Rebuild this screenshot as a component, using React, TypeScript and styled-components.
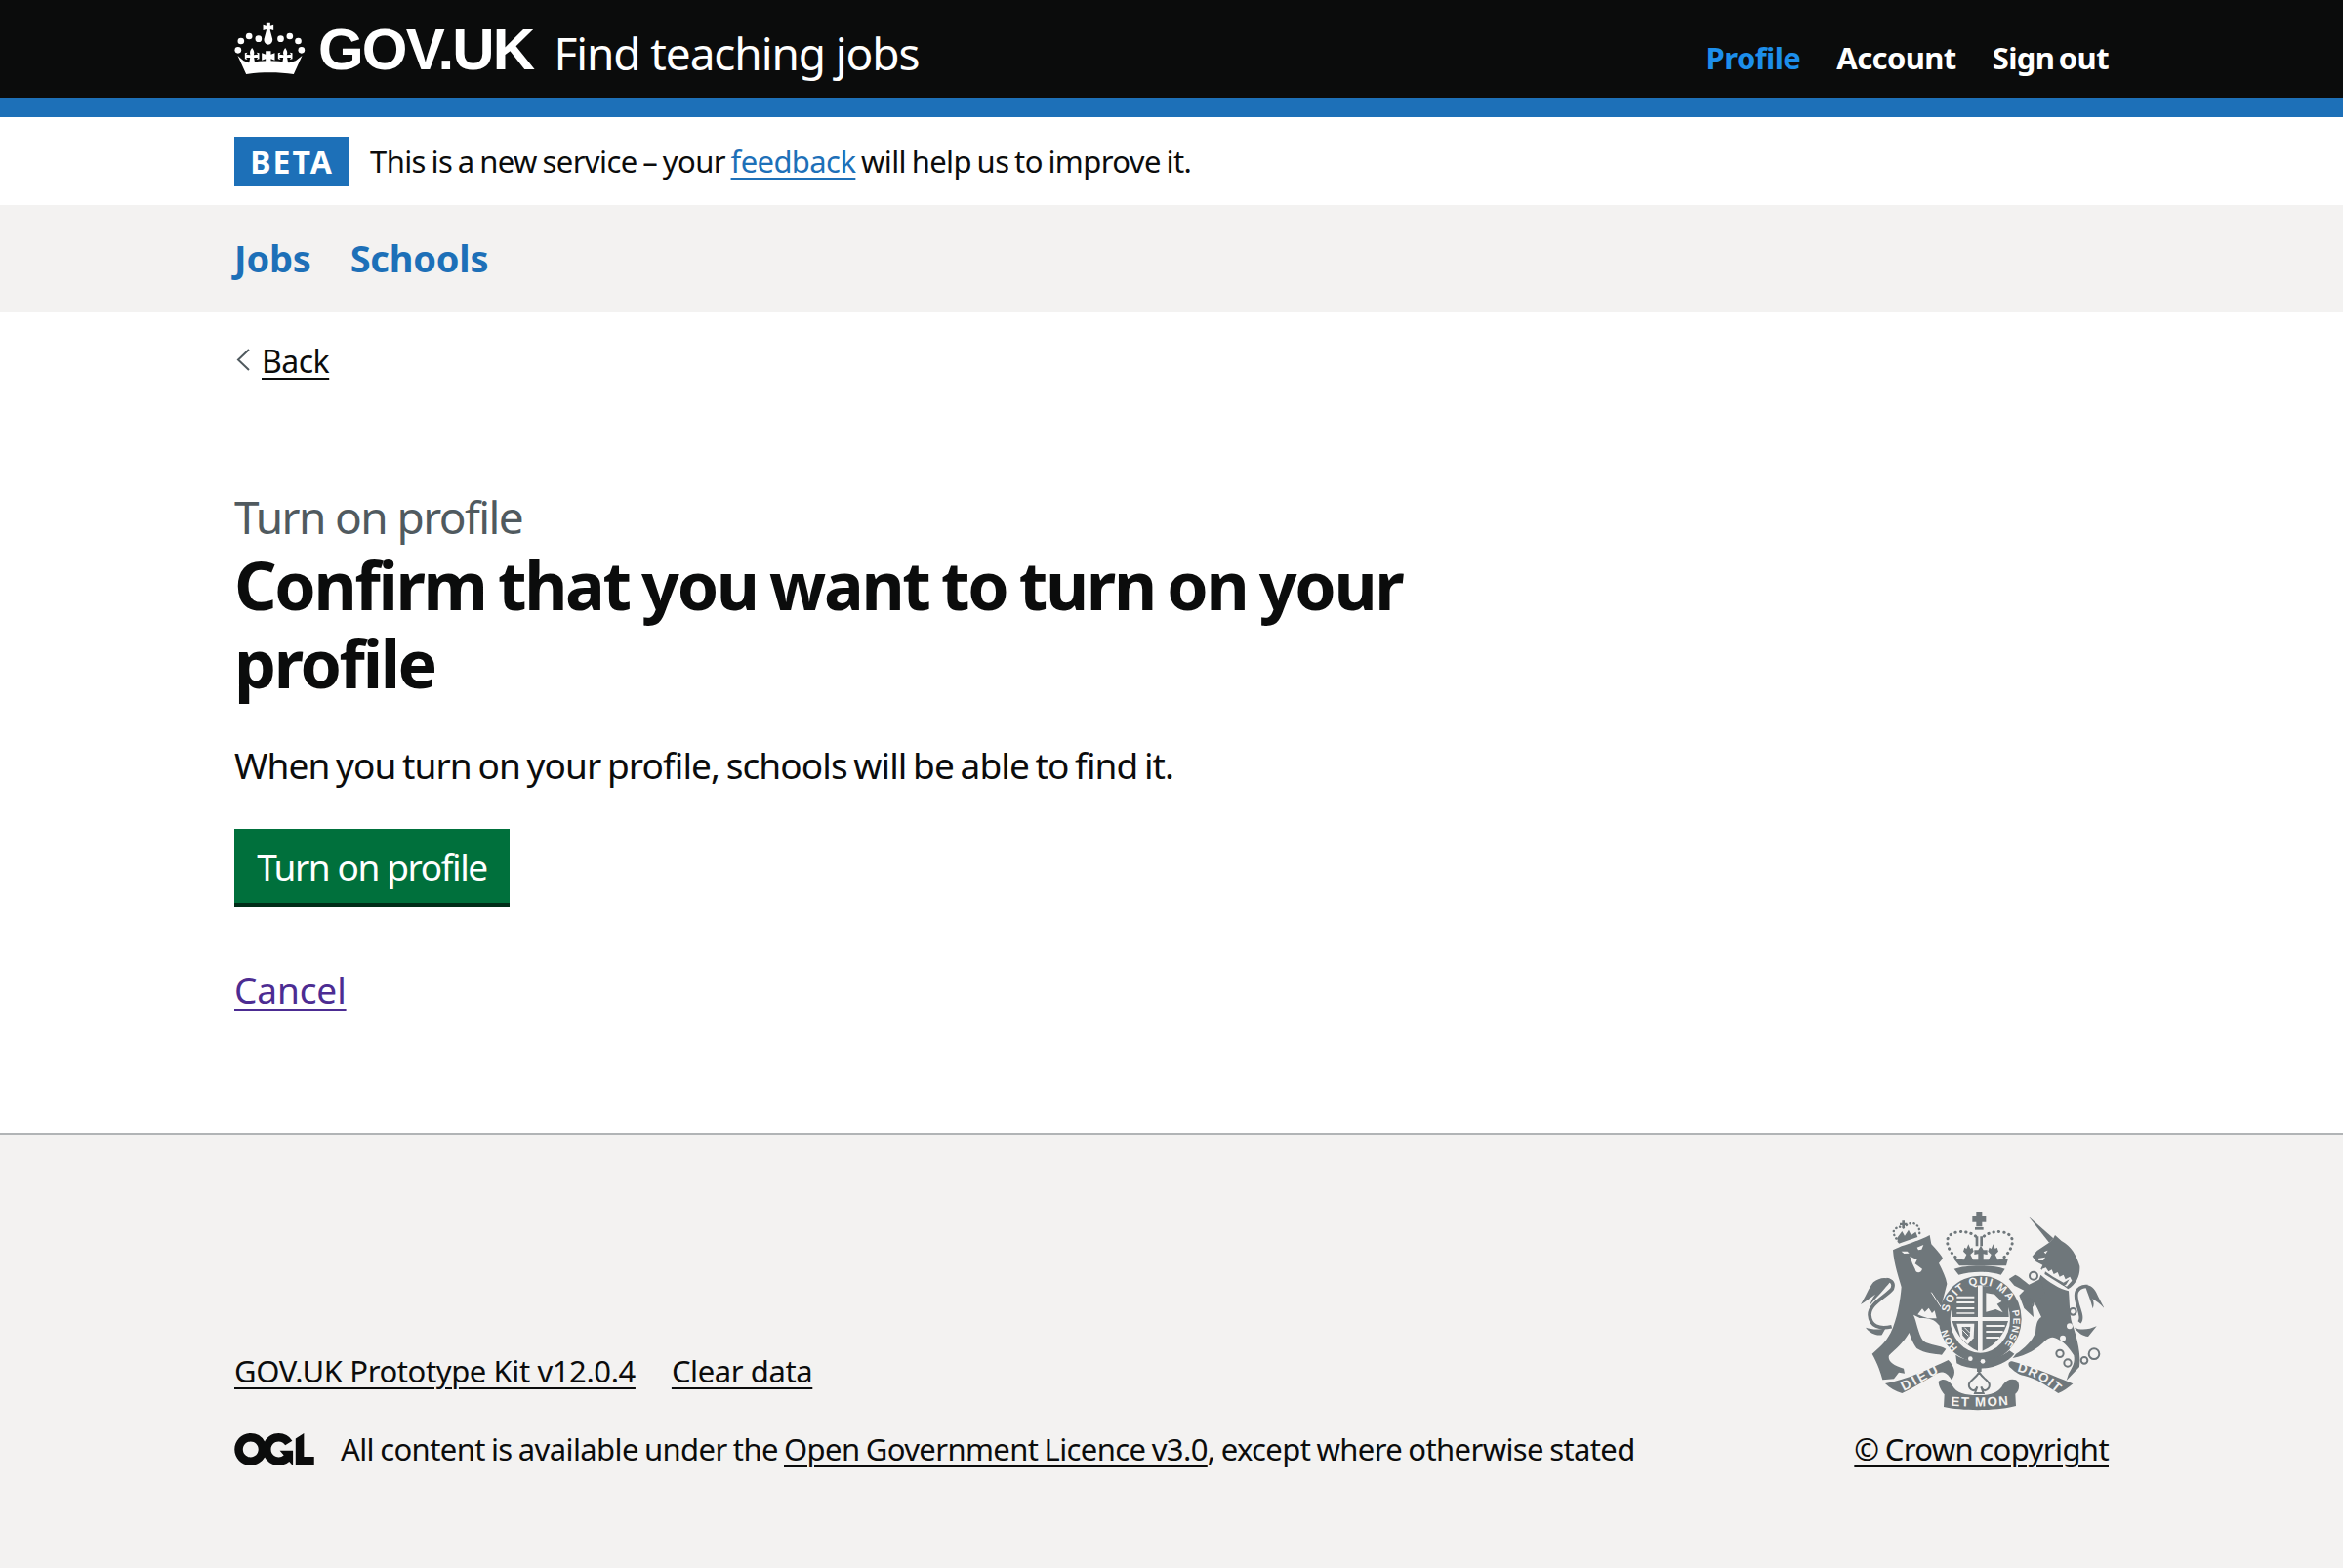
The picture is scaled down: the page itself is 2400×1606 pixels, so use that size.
import React from 'react';
import styled, { createGlobalStyle } from 'styled-components';

const GlobalStyle = createGlobalStyle`
  html, body {
    margin: 0;
    padding: 0;
    background: #fff;
    color: #0b0c0c;
    font-family: 'Noto Sans', Arial, sans-serif;
  }
`;

const Page = styled.div`
  width: 2400px;
  height: 1606px;
  display: flex;
  flex-direction: column;
`;

const Container = styled.div`
  margin: 0 240px;
  display: flex;
  align-items: center;
`;

const Header = styled.header`
  height: 100px;
  background: #0b0c0c;
  border-bottom: 20px solid #1d70b8;
`;

const HeaderRow = styled(Container)`
  height: 100px;
  justify-content: space-between;
`;

const Brand = styled.div`
  display: flex;
  align-items: center;
`;

const Logotype = styled.span`
  margin-left: 13px;
  font-family: 'Liberation Sans', Arial, sans-serif;
  font-size: 60px;
  font-weight: 700;
  color: #fff;
  letter-spacing: -1.8px;
`;

const ServiceName = styled.span`
  margin-left: 21px;
  margin-top: 8px;
  font-size: 46px;
  letter-spacing: -1.1px;
  color: #fff;
`;

const HeaderNav = styled.nav`
  display: flex;
  gap: 37px;
  margin-top: 18px;
`;

const HeaderLink = styled.a<{ $active?: boolean }>`
  font-size: 31px;
  font-weight: 700;
  letter-spacing: -0.6px;
  word-spacing: -3px;
  color: ${p => (p.$active ? '#1d8feb' : '#fff')};
`;

const BetaBanner = styled(Container)`
  height: 90px;
`;

const BetaTag = styled.strong`
  width: 118px;
  height: 50px;
  display: flex;
  align-items: center;
  justify-content: center;
  background: #1d70b8;
  color: #fff;
  font-size: 32px;
  font-weight: 700;
  letter-spacing: 2px;
`;

const BetaText = styled.span`
  margin-left: 21px;
  font-size: 31px;
  letter-spacing: -0.6px;
  word-spacing: -1.8px;
`;

const TextLink = styled.a<{ $colour?: string }>`
  color: ${p => p.$colour || '#0b0c0c'};
  text-decoration: underline;
  text-decoration-thickness: 2px;
  text-underline-offset: 5px;
`;

const ServiceNav = styled.nav`
  height: 110px;
  background: #f3f2f1;
`;

const ServiceNavRow = styled(Container)`
  height: 108px;
  gap: 40px;
`;

const ServiceLink = styled.a`
  font-size: 38px;
  font-weight: 700;
  letter-spacing: -0.2px;
  color: #1d70b8;
`;

const Main = styled.main`
  flex: 1;
  margin: 0 240px;
  display: flex;
  flex-direction: column;
  align-items: flex-start;
`;

const BackRow = styled.div`
  margin-top: 27px;
  height: 44px;
  display: flex;
  align-items: center;
  gap: 12px;
  font-size: 32px;
  letter-spacing: -0.5px;
`;

const Caption = styled.span`
  margin-top: 110px;
  height: 56px;
  line-height: 56px;
  font-size: 46px;
  letter-spacing: -1.6px;
  color: #505a5f;
`;

const Heading = styled.h1`
  margin: 2px 0 0;
  width: 1300px;
  font-size: 68px;
  line-height: 80px;
  font-weight: 700;
  letter-spacing: -2.3px;
  word-spacing: -3px;
`;

const Lead = styled.p`
  margin: 40px 0 0;
  height: 50px;
  line-height: 50px;
  font-size: 37px;
  letter-spacing: -0.9px;
  word-spacing: -2.1px;
`;

const PrimaryButton = styled.button`
  margin-top: 40px;
  width: 282px;
  height: 80px;
  padding: 0 0 4px;
  border: 0;
  box-shadow: inset 0 -4px 0 #002d18;
  background: #00703c;
  color: #fff;
  font-family: inherit;
  font-size: 37px;
  letter-spacing: -1.4px;
`;

const SecondaryAction = styled.div`
  margin-top: 59px;
  font-size: 37px;
  letter-spacing: -0.1px;
`;

const Footer = styled.footer`
  height: 446px;
  box-sizing: border-box;
  border-top: 2px solid #b1b4b6;
  background: #f3f2f1;
`;

const FooterRow = styled(Container)`
  height: 444px;
  justify-content: space-between;
  align-items: flex-end;
  padding-bottom: 101px;
  box-sizing: border-box;
  font-size: 31px;
  letter-spacing: -0.6px;
  word-spacing: -1.3px;
`;

const FooterMeta = styled.div`
  display: flex;
  flex-direction: column;
  gap: 38px;
`;

const FooterLinks = styled.div`
  display: flex;
  gap: 37px;
  line-height: 42px;
  letter-spacing: -0.4px;
  word-spacing: 0;
`;

const Licence = styled.div`
  display: flex;
  align-items: center;
  gap: 27px;
  line-height: 42px;
`;

const OglLogo = styled.svg`
  width: 82px;
  height: 33px;
  color: #0b0c0c;
`;

const Copyright = styled.div`
  display: flex;
  flex-direction: column;
  align-items: center;
  gap: 18px;
  line-height: 42px;
`;

const BackChevron = () => (
  <svg width="16" height="24" viewBox="0 0 16 24">
    <path d="M15 1 4 11.5 15 22" fill="none" stroke="#505a5f" strokeWidth="2" />
  </svg>
);

const FLEUR =
  'M78 98C84 106 86 112 83 120L96 118 92 112 100 114V132L92 134 96 128 84 128 88 152H68L72 128 60 128 64 134 56 132V114L64 112 60 118 73 120C70 112 72 106 78 98Z';

const Crown = () => (
  <svg width="73" height="54" viewBox="24 20 218 162" fill="#fff">
    <path d="M122 22h12v9l10-3v16l-10-3v4l7 26c1 10-6 17-13 17s-14-7-13-17l7-26v-4l-10 3V28l10 3z" />
    <circle cx="44" cy="77" r="10" />
    <circle cx="69" cy="62" r="10" />
    <circle cx="98" cy="70" r="10" />
    <circle cx="166" cy="70" r="10" />
    <circle cx="194" cy="62" r="10" />
    <circle cx="220" cy="77" r="10" />
    <circle cx="35" cy="105" r="10" />
    <circle cx="230" cy="105" r="10" />
    <path d={FLEUR} />
    <path d={FLEUR} transform="translate(102 0)" />
    <path d="M120 108H136V118L148 114V136L136 132V150H120V132L108 136V114L120 118Z" />
    <path d="M34 122 52 138 68 144C110 136 150 136 192 144L212 138 232 122 206 179C160 172 106 172 60 179Z" />
  </svg>
);

const OglMark = () => (
  <OglLogo viewBox="0 0 483.2 195.7">
    <path fill="currentColor" d="M421.5 142.8V.1l-50.7 32.3v161.1h112.4v-50.7zm-122.3-9.6A47.12 47.12 0 0 1 221 97.8c0-26 21.1-47.1 47.1-47.1 16.7 0 31.4 8.7 39.7 21.8l42.7-27.2A97.63 97.63 0 0 0 268.1 0c-36.5 0-68.3 20.1-85.1 49.7A98 98 0 0 0 97.8 0C43.9 0 0 43.9 0 97.8s43.9 97.8 97.8 97.8c36.5 0 68.3-20.1 85.1-49.7a97.76 97.76 0 0 0 149.6 25.4l19.4 22.2h3v-87.8h-80l24.3 27.5zM97.8 145c-26 0-47.1-21.1-47.1-47.1s21.1-47.1 47.1-47.1 47.2 21 47.2 47S123.8 145 97.8 145" />
  </OglLogo>
);

const CREST = '#6f777b';
const CREST_BG = '#f3f2f1';

const Crest = () => (
  <svg width="250" height="205" viewBox="70 65 750 615" fill={CREST}>
    <defs>
      <path id="garterTop" d="M343 378A101 108 0 0 1 534 356" />
      <path id="garterRight" d="M538 372A100 112 0 0 1 506 486" />
      <path id="garterLeft" d="M372 486A100 112 0 0 1 336 412" />
      <path id="ribbonLeft" d="M205 620Q260 592 318 560" />
      <path id="ribbonMid" d="M350 664Q437 670 527 662" />
      <path id="ribbonRight" d="M553 558Q615 572 672 622" />
    </defs>

    {/* lion */}
    <path d="M172 186C200 170 250 160 285 140L290 168C305 185 320 200 325 212L313 226C325 250 335 270 338 290L325 340 318 372C330 385 338 400 345 415L335 432 312 415C300 400 285 395 255 395L235 385C245 405 248 440 265 465 285 480 315 478 335 490L322 508C300 505 270 505 245 488 232 470 225 450 222 440 205 470 180 490 160 510 155 525 170 540 205 550L208 565 190 562 175 582 140 585C135 565 125 535 108 505 125 490 150 470 165 440 185 400 195 340 198 300 190 270 175 230 172 186Z" />
    <path d="M168 421C130 430 102 420 100 385 100 350 150 330 170 305 176 290 170 280 152 277" fill="none" stroke={CREST} strokeWidth="11" />
    <path d="M166 276C145 268 128 272 112 285 96 305 88 330 73 353 88 343 100 335 118 322 108 335 104 345 100 358 112 340 130 325 150 300 160 290 164 284 166 276Z" />
    <path d="M88 424C105 428 125 434 150 425L138 447C118 450 100 440 88 424Z" />
    <path d="M224 205 246 216 240 228 262 244C258 258 242 258 240 244L232 228Z" fill={CREST_BG} />
    <path d="M198 190 216 190 222 196 206 197ZM246 178 266 170 260 184 250 186Z" fill={CREST_BG} />
    <path d="M248 384 262 366 270 376 282 364 292 380 300 372 306 396 280 396 262 390Z" fill={CREST_BG} />
    <path d="M290 316 345 400" stroke={CREST_BG} strokeWidth="3" />
    {/* lion crown */}
    <g fill="none" stroke={CREST} strokeWidth="7" strokeLinecap="round" strokeDasharray="1 11">
      <path d="M190 160C176 146 168 128 180 120 190 114 198 114 204 118 212 108 228 100 240 106 254 114 256 130 252 144" />
    </g>
    <path d="M184 150 200 128 208 142 220 124 228 140 242 130 248 146 190 166Z" />
    <path d="M200 96H208V103H215V110H208V118H200V110H193V103H200Z" />

    {/* unicorn */}
    <path d="M588 82 665 150 652 163Z" />
    <path d="M652 163 615 188 600 205 612 222 632 232 626 244 710 306C735 290 748 265 746 235 735 200 720 175 690 158L670 140 665 150Z" />
    <path d="M626 262C650 285 685 305 712 312 715 350 715 385 722 410 740 460 750 510 745 545L705 587 712 565C725 545 732 530 728 510 715 490 700 470 682 462 665 450 655 452 640 465 615 490 585 510 540 518L550 505C575 490 600 465 610 440 612 415 615 400 628 392 618 370 610 350 600 340Z" />
    <path d="M528 275 548 262C565 270 580 285 590 292L625 275 640 320 610 345 600 352 604 392 575 365 560 325 575 310 545 295Z" />
    <path d="M745 408C760 390 735 360 735 325 735 305 755 295 770 298" fill="none" stroke={CREST} strokeWidth="11" />
    <path d="M762 294C785 292 795 310 803 330L822 366C810 352 796 342 785 336 790 346 790 356 786 366 780 340 770 320 762 294Z" />
    <path d="M730 424C750 434 775 430 798 420L772 452C755 450 740 440 730 424Z" />
    <path d="M630 244 642 240 650 252 660 246 666 260 678 254 684 268 696 262 702 276 716 268 722 280 706 298 630 250Z" fill={CREST_BG} />
    <path d="M640 252 664 268 696 286 714 276 704 292 696 296 638 260Z" />
    <path d="M636 192 648 187 641 198ZM618 212 640 208 634 218 620 218Z" fill={CREST_BG} />
    <g fill="none" stroke={CREST} strokeWidth="6">
      <circle cx="604" cy="265" r="12" />
      <circle cx="590" cy="350" r="13" />
      <circle cx="725" cy="375" r="10" />
      <circle cx="685" cy="504" r="11" />
      <circle cx="709" cy="533" r="11" />
      <circle cx="760" cy="525" r="10" />
      <circle cx="790" cy="505" r="16" />
    </g>
    <circle cx="715" cy="420" r="9" fill={CREST_BG} />
    <circle cx="694" cy="457" r="9" fill={CREST_BG} />

    {/* royal crown */}
    <path d="M428 68H446V80H458V100H446V114H428V100H416V80H428Z" />
    <path d="M424 116H450V124H424Z" />
    <path d="M426 144H434V174H426ZM440 144H448V174H440Z" />
    <g fill="none" stroke={CREST} strokeWidth="9" strokeLinecap="round" strokeDasharray="1 15">
      <path d="M364 208C334 178 324 136 374 130 402 128 422 136 434 152" />
      <path d="M514 208C544 178 554 136 504 130 476 128 456 136 444 152" />
    </g>
    <path d="M358 212 390 216 398 200 388 190 392 178 398 182 404 168 410 182 416 178 420 190 410 200 418 216H434V198L422 200V186H434L442 172 450 186H462V200L450 198V216H466L474 200 464 190 468 178 474 182 480 168 486 182 492 178 496 190 486 200 494 216 526 212 520 234H376Z" />
    <path d="M360 244C400 230 475 230 516 244L504 262C464 250 414 250 374 262Z" />

    {/* garter and shield */}
    <ellipse cx="440" cy="398" rx="127" ry="133" />
    <ellipse cx="440" cy="398" rx="92" ry="104" fill={CREST_BG} />
    <path d="M357 312C380 300 410 298 433 296V392H352ZM447 296C470 298 500 300 523 312L528 392H447ZM354 404H433V496C395 480 365 445 354 404ZM447 404H526C515 445 485 480 447 496Z" />
    <g fill={CREST_BG}>
      <path d="M368 328H422V334H368ZM368 344H422V350H368ZM368 362H422V368H368ZM368 378H422V382H368Z" />
      <path d="M458 318 484 322 506 344 492 352 510 378 488 368 458 376Z" />
      <path d="M458 416H516V422H458ZM458 434H510V440H458ZM458 452H500V458H458Z" />
      <path d="M368 412H422L420 456 402 476 380 456Z" />
    </g>
    <path d="M384 422H410L408 450 398 462 386 448Z" />
    <path d="M386 432 404 450M392 424 408 440" stroke={CREST_BG} strokeWidth="3" />
    <g fill={CREST_BG} fontFamily="'Liberation Sans', Arial, sans-serif" fontWeight="700">
      <text fontSize="34"><textPath href="#garterTop" textLength="308">SOIT QUI MAL Y</textPath></text>
      <text fontSize="30"><textPath href="#garterRight" textLength="110">PENSE</textPath></text>
      <text fontSize="30"><textPath href="#garterLeft" textLength="66">HON</textPath></text>
    </g>
    <path d="M365 508C400 535 490 530 530 495L545 505C510 550 420 565 368 534Z" />
    <circle cx="410" cy="520" r="7" fill={CREST_BG} />
    <circle cx="448" cy="528" r="7" fill={CREST_BG} />

    {/* motto */}
    <path d="M148 596C215 585 290 548 342 524 362 545 368 565 352 585 338 560 320 555 300 570 265 590 235 610 200 626 180 620 162 610 148 596Z" />
    <path d="M312 590C330 575 348 590 360 610 375 630 410 632 440 632 480 632 500 620 510 600 520 585 535 580 550 585 565 595 560 620 548 628L550 665C500 680 390 682 328 668L330 630C322 620 312 605 312 590Z" />
    <path d="M530 545C524 535 528 528 538 528 600 545 665 572 725 597 710 610 695 620 680 626 640 600 610 580 575 572 555 568 545 558 530 545Z" />
    <path d="M437 562C420 588 398 590 408 610 420 626 428 612 431 606L424 626H450L443 606C446 612 454 626 466 610 476 590 454 588 437 562Z" fill={CREST_BG} stroke={CREST} strokeWidth="6" />
    <path d="M430 548H444V560H430Z" />
    <g fill={CREST_BG} fontFamily="'Liberation Sans', Arial, sans-serif" fontWeight="700">
      <text fontSize="42"><textPath href="#ribbonLeft" textLength="122">DIEU</textPath></text>
      <text fontSize="40"><textPath href="#ribbonMid" textLength="176">ET MON</textPath></text>
      <text fontSize="40"><textPath href="#ribbonRight" textLength="140">DROIT</textPath></text>
    </g>
  </svg>
);

export default function App() {
  return (
    <Page>
      <GlobalStyle />
      <Header>
        <HeaderRow>
          <Brand>
            <Crown />
            <Logotype>GOV.UK</Logotype>
            <ServiceName>Find teaching jobs</ServiceName>
          </Brand>
          <HeaderNav>
            <HeaderLink $active>Profile</HeaderLink>
            <HeaderLink>Account</HeaderLink>
            <HeaderLink>Sign out</HeaderLink>
          </HeaderNav>
        </HeaderRow>
      </Header>
      <BetaBanner>
        <BetaTag>BETA</BetaTag>
        <BetaText>
          This is a new service – your <TextLink $colour="#1d70b8">feedback</TextLink> will help us to improve it.
        </BetaText>
      </BetaBanner>
      <ServiceNav>
        <ServiceNavRow>
          <ServiceLink>Jobs</ServiceLink>
          <ServiceLink>Schools</ServiceLink>
        </ServiceNavRow>
      </ServiceNav>
      <Main>
        <BackRow>
          <BackChevron />
          <TextLink>Back</TextLink>
        </BackRow>
        <Caption>Turn on profile</Caption>
        <Heading>Confirm that you want to turn on your profile</Heading>
        <Lead>When you turn on your profile, schools will be able to find it.</Lead>
        <PrimaryButton>Turn on profile</PrimaryButton>
        <SecondaryAction>
          <TextLink $colour="#4c2c92">Cancel</TextLink>
        </SecondaryAction>
      </Main>
      <Footer>
        <FooterRow>
          <FooterMeta>
            <FooterLinks>
              <TextLink>GOV.UK Prototype Kit v12.0.4</TextLink>
              <TextLink>Clear data</TextLink>
            </FooterLinks>
            <Licence>
              <OglMark />
              <span>
                All content is available under the <TextLink>Open Government Licence v3.0</TextLink>, except where otherwise stated
              </span>
            </Licence>
          </FooterMeta>
          <Copyright>
            <Crest />
            <TextLink>© Crown copyright</TextLink>
          </Copyright>
        </FooterRow>
      </Footer>
    </Page>
  );
}
